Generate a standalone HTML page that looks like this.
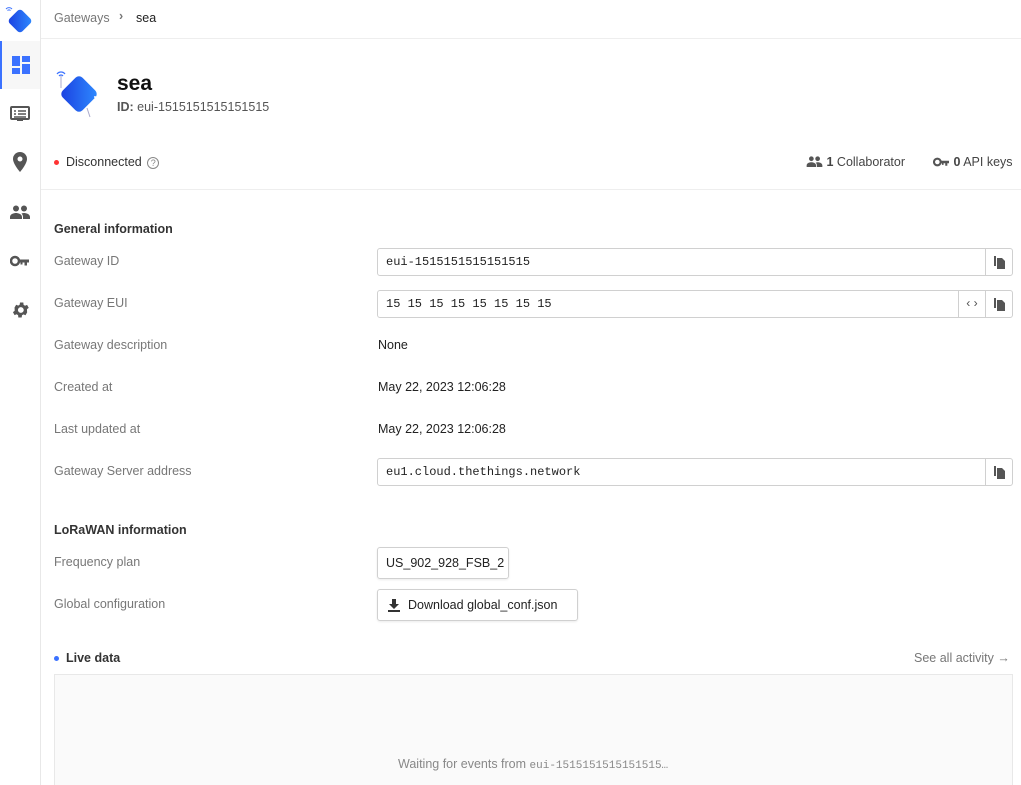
<!DOCTYPE html>
<html><head><meta charset="utf-8"><style>
*{box-sizing:border-box;margin:0;padding:0}
html,body{width:1021px;height:785px;overflow:hidden}
body{background:#fff;font-family:"Liberation Sans",sans-serif;font-size:12.5px;color:#222;position:relative}
.side{position:absolute;left:0;top:0;width:41px;height:785px;border-right:1px solid #e8e8e8}
.nav{position:absolute;left:0;width:40px;height:48px;display:flex;align-items:center;justify-content:center}
.nav.act{background:#f7f7f7;border-left:2px solid #3b72ff}
.top{position:absolute;left:41px;top:0;right:0;height:39px;border-bottom:1px solid #eee}
.a{position:absolute}
.lbl{position:absolute;left:54px;color:#777}
.inp{position:absolute;left:377px;width:636px;height:28px;border:1px solid #d0d0d0;border-radius:3px;font-family:"Liberation Mono",monospace;font-size:12px;padding:0 8px;line-height:26px;color:#222}
.ib{position:absolute;top:0;right:0;width:27px;height:26px;border-left:1px solid #d0d0d0;display:flex;align-items:center;justify-content:center}
.val{position:absolute;left:378px}
.btn{position:absolute;left:377px;border:1px solid #d0d0d0;border-radius:3px;box-shadow:0 1px 2px rgba(0,0,0,.08);padding:0 8px;display:flex;align-items:center}
</style></head><body>
<div class="side">
 <div class="a" style="left:5px;top:5px"><svg width="30" height="30" viewBox="0 0 30 30"><defs><linearGradient id="g" x1="0" y1="1" x2="1" y2="0"><stop offset="0" stop-color="#1b3fe0"/><stop offset="1" stop-color="#2e8bff"/></linearGradient></defs><path d="M1 4a4 4 0 0 1 6 0M2.5 5.5a2 2 0 0 1 3 0" stroke="#3b72ff" fill="none" stroke-width="1"/><rect x="6" y="7" width="18" height="18" rx="3.5" transform="rotate(45 15 16)" fill="url(#g)"/></svg></div>
 <div class="nav act" style="top:41px"><svg width="18" height="18" viewBox="0 0 18 18" fill="#3b72ff"><rect x="0" y="0" width="8" height="10"/><rect x="10" y="0" width="8" height="6"/><rect x="0" y="12" width="8" height="6"/><rect x="10" y="8" width="8" height="10"/></svg></div>
 <div class="nav" style="top:90px"><svg width="20" height="18" viewBox="0 0 20 18"><rect x="1" y="2" width="18" height="12" rx="1" fill="none" stroke="#555" stroke-width="2"/><rect x="7" y="14" width="6" height="2" fill="#555"/><path d="M4 6h2M8 6h8M4 9h2M8 9h8M4 12h12" stroke="#555" stroke-width="1.5"/></svg></div>
 <div class="nav" style="top:138px"><svg width="14" height="20" viewBox="0 0 14 20"><path d="M7 0a7 7 0 0 0-7 7c0 5 7 13 7 13s7-8 7-13a7 7 0 0 0-7-7z" fill="#555"/><circle cx="7" cy="7" r="2.5" fill="#fff"/></svg></div>
 <div class="nav" style="top:188px"><svg width="20" height="14" viewBox="0 0 20 14" fill="#555"><circle cx="6" cy="3.5" r="3"/><circle cx="14" cy="3.5" r="3"/><path d="M0 14v-2c0-3 4-4 6-4s6 1 6 4v2zM13 14v-2c0-1.5-.6-2.6-1.5-3.5 1-.3 2-.5 2.5-.5 2 0 6 1 6 4v2z"/></svg></div>
 <div class="nav" style="top:237px"><svg width="20" height="12" viewBox="0 0 20 12"><circle cx="5" cy="6" r="4" fill="none" stroke="#555" stroke-width="2.5"/><path d="M9 4.5h10v3h-2v3h-2.5v-3h-2v2h-2v-2H9z" fill="#555"/></svg></div>
 <div class="nav" style="top:286px"><svg width="20" height="20" viewBox="0 0 24 24" fill="#555"><path d="M19.4 13a7.5 7.5 0 0 0 0-2l2.1-1.6-2-3.5-2.5 1a7 7 0 0 0-1.7-1L15 3h-4l-.4 2.7a7 7 0 0 0-1.7 1l-2.5-1-2 3.5L4.6 11a7.5 7.5 0 0 0 0 2l-2.1 1.6 2 3.5 2.5-1a7 7 0 0 0 1.7 1L9 21h4l.4-2.7a7 7 0 0 0 1.7-1l2.5 1 2-3.5zM12 15.5a3.5 3.5 0 1 1 0-7 3.5 3.5 0 0 1 0 7z" transform="translate(1 0)"/></svg></div>
</div>
<div class="top"><div class="a" style="left:13px;top:11px;color:#777">Gateways</div><div class="a" style="left:78px;top:9px;color:#777;font-weight:bold">›</div><div class="a" style="left:95px;top:11px">sea</div></div>

<div class="a" style="left:55px;top:68px"><svg width="50" height="52" viewBox="0 0 50 52"><defs><linearGradient id="g2" x1="0" y1="1" x2="1" y2="0"><stop offset="0" stop-color="#1b3fe0"/><stop offset="1" stop-color="#2e8bff"/></linearGradient></defs><path d="M2 6a5 5 0 0 1 8 0M4 8a2.5 2.5 0 0 1 4 0" stroke="#3b72ff" fill="none" stroke-width="1.2"/><line x1="6" y1="8" x2="6" y2="20" stroke="#aac" stroke-width="1"/><line x1="32" y1="40" x2="35" y2="49" stroke="#aac" stroke-width="1"/><rect x="10" y="12" width="28" height="28" rx="5" transform="rotate(45 24 26)" fill="url(#g2)"/><circle cx="40" cy="29" r="1" fill="#fff"/></svg></div>
<div class="a" style="left:117px;top:72px;font-size:21px;font-weight:bold;color:#111">sea</div>
<div class="a" style="left:117px;top:100px;color:#555"><b>ID:</b> eui-1515151515151515</div>
<div class="a" style="left:54px;top:160px;width:5px;height:5px;border-radius:50%;background:#f33"></div>
<div class="a" style="left:66px;top:155px;color:#333">Disconnected <span style="display:inline-block;width:12px;height:12px;border:1px solid #888;border-radius:50%;font-size:9px;text-align:center;line-height:10px;color:#888;margin-left:2px">?</span></div>
<div class="a" style="left:806px;top:155px;color:#444"><svg width="17" height="11" viewBox="0 0 20 14" fill="#555" style="vertical-align:-1px"><circle cx="6" cy="3.5" r="3"/><circle cx="14" cy="3.5" r="3"/><path d="M0 14v-2c0-3 4-4 6-4s6 1 6 4v2zM13 14v-2c0-1.5-.6-2.6-1.5-3.5 1-.3 2-.5 2.5-.5 2 0 6 1 6 4v2z"/></svg> <b>1</b> Collaborator</div>
<div class="a" style="left:933px;top:155px;color:#444"><svg width="17" height="10" viewBox="0 0 20 12" style="vertical-align:-1px"><circle cx="5" cy="6" r="4" fill="none" stroke="#555" stroke-width="2.5"/><path d="M9 4.5h10v3h-2v3h-2.5v-3h-2v2h-2v-2H9z" fill="#555"/></svg> <b>0</b> API keys</div>
<div class="a" style="left:41px;top:189px;right:0;border-top:1px solid #eee"></div>

<div class="a" style="left:54px;top:222px;font-weight:bold;color:#333">General information</div>
<div class="lbl" style="top:254px">Gateway ID</div>
<div class="inp" style="top:248px">eui-1515151515151515<div class="ib"><svg width="11" height="13" viewBox="0 0 11 13" fill="#555"><rect x="0" y="0" width="2" height="10"/><path d="M3 2h5l3 3v8H3z"/></svg></div></div>
<div class="lbl" style="top:296px">Gateway EUI</div>
<div class="inp" style="top:290px">15 15 15 15 15 15 15 15<div class="ib" style="right:27px;font-size:12px;color:#555">‹›</div><div class="ib"><svg width="11" height="13" viewBox="0 0 11 13" fill="#555"><rect x="0" y="0" width="2" height="10"/><path d="M3 2h5l3 3v8H3z"/></svg></div></div>
<div class="lbl" style="top:338px">Gateway description</div><div class="val" style="top:338px">None</div>
<div class="lbl" style="top:380px">Created at</div><div class="val" style="top:380px">May 22, 2023 12:06:28</div>
<div class="lbl" style="top:422px">Last updated at</div><div class="val" style="top:422px">May 22, 2023 12:06:28</div>
<div class="lbl" style="top:464px">Gateway Server address</div>
<div class="inp" style="top:458px">eu1.cloud.thethings.network<div class="ib"><svg width="11" height="13" viewBox="0 0 11 13" fill="#555"><rect x="0" y="0" width="2" height="10"/><path d="M3 2h5l3 3v8H3z"/></svg></div></div>

<div class="a" style="left:54px;top:523px;font-weight:bold;color:#333">LoRaWAN information</div>
<div class="lbl" style="top:555px">Frequency plan</div>
<div class="btn" style="top:547px;height:32px;width:132px">US_902_928_FSB_2</div>
<div class="lbl" style="top:597px">Global configuration</div>
<div class="btn" style="top:589px;height:32px;width:201px"><svg width="12" height="13" viewBox="0 0 12 13" fill="#333" style="margin-right:8px;margin-left:2px"><path d="M4 0h4v5h3l-5 5-5-5h3z"/><rect x="0" y="11" width="12" height="2"/></svg>Download global_conf.json</div>

<div class="a" style="left:54px;top:656px;width:5px;height:5px;border-radius:50%;background:#3b72ff"></div>
<div class="a" style="left:66px;top:651px;font-weight:bold;color:#333">Live data</div>
<div class="a" style="left:914px;top:651px;color:#777">See all activity →</div>
<div class="a" style="left:54px;top:674px;width:959px;height:120px;background:#fafafa;border:1px solid #e8e8e8"></div>
<div class="a" style="left:398px;top:757px;color:#888">Waiting for events from <span style="font-family:'Liberation Mono',monospace;font-size:11px">eui-1515151515151515…</span></div>
</body></html>
